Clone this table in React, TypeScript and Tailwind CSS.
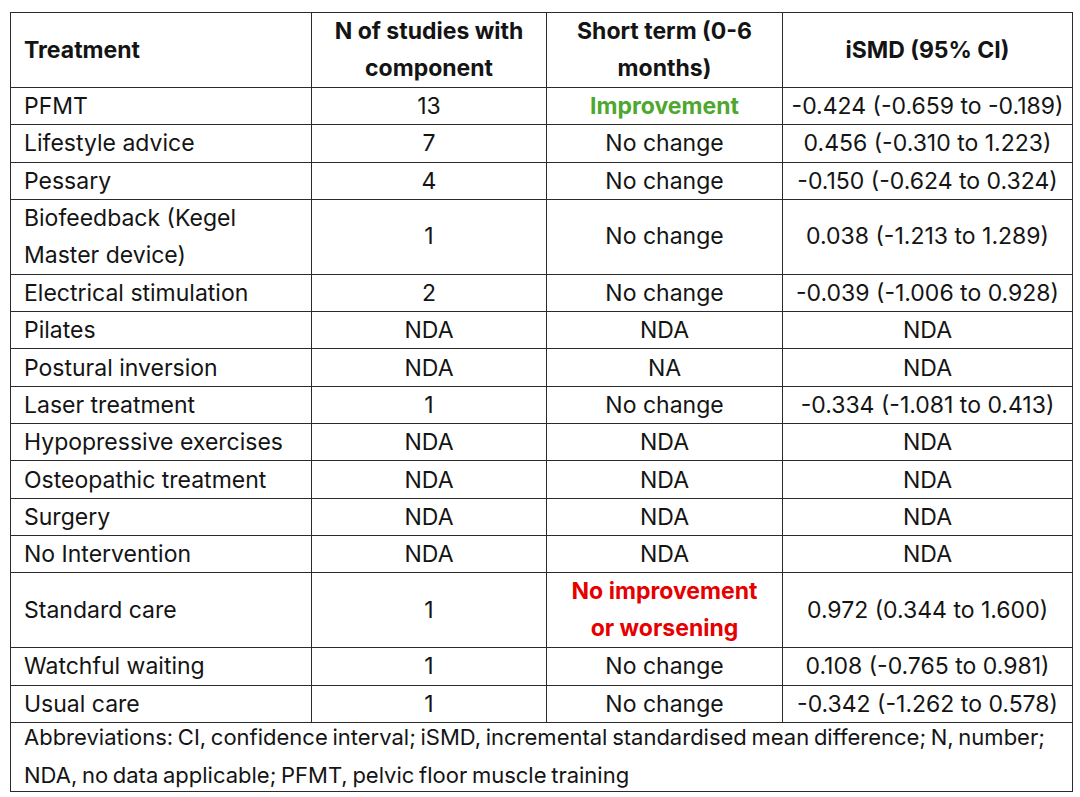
import React from 'react';

type Row = {
  name: string;
  n: string;
  shortTerm: string;
  ismd: string;
  tone?: 'good' | 'bad';
  tall?: boolean;
};

const rows: Row[] = [
  { name: 'PFMT', n: '13', shortTerm: 'Improvement', ismd: '-0.424 (-0.659 to -0.189)', tone: 'good' },
  { name: 'Lifestyle advice', n: '7', shortTerm: 'No change', ismd: '0.456 (-0.310 to 1.223)' },
  { name: 'Pessary', n: '4', shortTerm: 'No change', ismd: '-0.150 (-0.624 to 0.324)' },
  { name: 'Biofeedback (Kegel Master device)', n: '1', shortTerm: 'No change', ismd: '0.038 (-1.213 to 1.289)', tall: true },
  { name: 'Electrical stimulation', n: '2', shortTerm: 'No change', ismd: '-0.039 (-1.006 to 0.928)' },
  { name: 'Pilates', n: 'NDA', shortTerm: 'NDA', ismd: 'NDA' },
  { name: 'Postural inversion', n: 'NDA', shortTerm: 'NA', ismd: 'NDA' },
  { name: 'Laser treatment', n: '1', shortTerm: 'No change', ismd: '-0.334 (-1.081 to 0.413)' },
  { name: 'Hypopressive exercises', n: 'NDA', shortTerm: 'NDA', ismd: 'NDA' },
  { name: 'Osteopathic treatment', n: 'NDA', shortTerm: 'NDA', ismd: 'NDA' },
  { name: 'Surgery', n: 'NDA', shortTerm: 'NDA', ismd: 'NDA' },
  { name: 'No Intervention', n: 'NDA', shortTerm: 'NDA', ismd: 'NDA' },
  { name: 'Standard care', n: '1', shortTerm: 'No improvement or worsening', ismd: '0.972 (0.344 to 1.600)', tone: 'bad', tall: true },
  { name: 'Watchful waiting', n: '1', shortTerm: 'No change', ismd: '0.108 (-0.765 to 0.981)' },
  { name: 'Usual care', n: '1', shortTerm: 'No change', ismd: '-0.342 (-1.262 to 0.578)' },
];

const cell = 'border-[1.5px] border-[#2b2b2b] px-[13px] py-0 align-middle';

export default function App() {
  return (
    <div className="min-h-screen bg-white pl-[10px] pt-[12px] text-[#141414] text-[23px] font-['Inter','Liberation_Sans',sans-serif]">
      <table className="table-fixed border-collapse w-[1062px]">
        <colgroup>
          <col className="w-[301px]" />
          <col className="w-[235px]" />
          <col className="w-[236px]" />
          <col className="w-[290px]" />
        </colgroup>
        <thead>
          {/* Header row: two-line column labels */}
          <tr className="h-[75px] font-bold leading-[37px]">
            <th className={`${cell} text-left`}>Treatment</th>
            <th className={`${cell} text-center`}>
              N of studies with
              <br />
              component
            </th>
            <th className={`${cell} text-center`}>
              Short term (0-6
              <br />
              months)
            </th>
            <th className={`${cell} text-center`}>iSMD (95% CI)</th>
          </tr>
        </thead>
        <tbody>
          {rows.map((r) => (
            <tr
              key={r.name}
              className={r.tall ? 'h-[75px] leading-[37px]' : 'h-[37.3px] leading-[30px]'}
            >
              <td className={`${cell} text-left`}>
                {r.name === 'Biofeedback (Kegel Master device)' ? (
                  <>
                    Biofeedback (Kegel
                    <br />
                    Master device)
                  </>
                ) : (
                  r.name
                )}
              </td>
              <td className={`${cell} text-center`}>{r.n}</td>
              <td
                className={`${cell} text-center ${
                  r.tone === 'good'
                    ? 'font-bold text-[#4ea72e]'
                    : r.tone === 'bad'
                    ? 'font-bold text-[#e60000]'
                    : ''
                }`}
              >
                {r.tone === 'bad' ? (
                  <>
                    No improvement
                    <br />
                    or worsening
                  </>
                ) : (
                  r.shortTerm
                )}
              </td>
              <td className="border-[1.5px] border-[#2b2b2b] px-[4px] py-0 align-middle text-center whitespace-nowrap">
                {r.ismd}
              </td>
            </tr>
          ))}
          {/* Footnote row */}
          <tr className="h-[69px]">
            <td colSpan={4} className={`${cell} text-left align-top`}>
              <div className="h-[64px] -mt-[5px] text-[22px] leading-[38px] [word-spacing:-1.5px]">
                Abbreviations: CI, confidence interval; iSMD, incremental standardised mean difference; N, number;
                <br />
                NDA, no data applicable; PFMT, pelvic floor muscle training
              </div>
            </td>
          </tr>
        </tbody>
      </table>
    </div>
  );
}
